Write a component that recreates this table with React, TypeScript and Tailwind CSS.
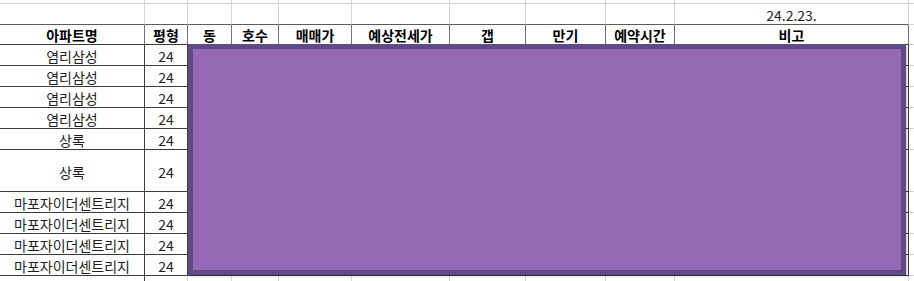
import React from "react";

const W = [145, 43, 44, 47, 73, 98, 76, 80, 69, 234];

const LIGHT = "border-[#d4d4d4]";

function GridRow({ h, kind, cells }: { h: string; kind: "top" | "date" | "head" | "data" | "tail"; cells: React.ReactNode[] }) {
  return (
    <div className={`flex ${h}`}>
      {W.map((w, i) => {
        let cls = "";
        if (kind === "top") cls = "border-r border-b border-[#d4d4d4]";
        else if (kind === "date") cls = "border-r border-[#d4d4d4] border-b border-b-[#5a5a5a]";
        else if (kind === "head") cls = "border-r border-b border-r-[#707070] border-b-[#3a3a3a] font-bold text-black";
        else if (kind === "data") cls = "border-r border-b border-r-[#404040] border-b-[#3a3a3a] text-[#1e1e1e]";
        else cls = i === 0 ? "border-r border-r-[#404040]" : "border-r border-[#d4d4d4]";
        return (
          <div
            key={i}
            style={{ width: w }}
            className={`shrink-0 flex items-center justify-center whitespace-nowrap leading-none ${cls}`}
          >
            {cells[i] ?? null}
          </div>
        );
      })}
      <div className={`flex-1 ${kind === "tail" ? "" : "border-b"} ${LIGHT}`} />
    </div>
  );
}

const rows: { name: string; tall?: boolean }[] = [
  { name: "염리삼성" },
  { name: "염리삼성" },
  { name: "염리삼성" },
  { name: "염리삼성" },
  { name: "상록" },
  { name: "상록", tall: true },
  { name: "마포자이더센트리지" },
  { name: "마포자이더센트리지" },
  { name: "마포자이더센트리지" },
  { name: "마포자이더센트리지" },
];

export default function App() {
  return (
    <div
      className="relative w-[914px] h-[281px] overflow-hidden bg-white text-[14px]"
      style={{ fontFamily: '"Noto Sans CJK KR", "Noto Sans", sans-serif' }}
    >
      <GridRow h="h-[4px]" kind="top" cells={[]} />
      <GridRow
        h="h-[21px]"
        kind="date"
        cells={[null, null, null, null, null, null, null, null, null, <span className="text-[#222] pt-[2px]">24.2.23.</span>]}
      />
      <GridRow
        h="h-[20px]"
        kind="head"
        cells={["아파트명", "평형", "동", "호수", "매매가", "예상전세가", "갭", "만기", "예약시간", "비고"]}
      />
      {rows.map((r, i) => (
        <GridRow
          key={i}
          h={r.tall ? "h-[42px]" : "h-[21px]"}
          kind="data"
          cells={[<span className="pt-[2px]">{r.name}</span>, <span className="pt-[2px]">24</span>]}
        />
      ))}
      <GridRow h="h-[20px]" kind="tail" cells={[]} />

      <div className="absolute left-[188px] top-[44px] w-[718px] h-[231px] border-[5px] border-[#5f4a86] bg-[#9669b7] shadow-[1px_1px_2px_rgba(0,0,0,0.25)]" />
    </div>
  );
}
